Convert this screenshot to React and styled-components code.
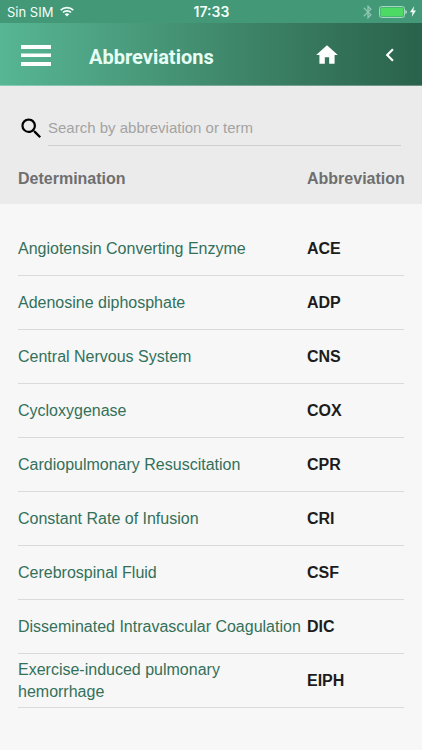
import React from 'react';
import styled, {createGlobalStyle} from 'styled-components';
import {MdBluetooth, MdChevronLeft, MdHome, MdSearch} from 'react-icons/md';

const GlobalStyle = createGlobalStyle`
  *, *::before, *::after {
    box-sizing: border-box;
  }

  body {
    margin: 0;
    background-color: #f7f7f7;
    font-family: 'Liberation Sans', Arial, sans-serif;
    font-size: 16px;
    line-height: 22px;
  }
`;

const StatusBar = styled.div`
  display: grid;
  grid-template-columns: 1fr auto 1fr;
  align-items: center;
  height: 23px;
  padding: 0 6px 0 7px;
  background-color: #439878;
  color: #f2fffa;
  font-family: Inter, sans-serif;
  font-size: 13px;
`;

const StatusGroup = styled.div`
  display: flex;
  align-items: center;
  justify-content: ${({$end}) => ($end ? 'flex-end' : 'flex-start')};
  gap: ${({$end}) => ($end ? '3px' : '7px')};
`;

const Clock = styled.time`
  font-size: 14px;
  font-weight: 600;
`;

const Bluetooth = styled(MdBluetooth)`
  color: #8fc7b1;
`;

const Header = styled.header`
  display: flex;
  align-items: center;
  height: 63px;
  padding: 2px 19px 0 21px;
  border-bottom: 1px solid rgba(255, 255, 255, 0.3);
  background: linear-gradient(to right, #57b694, #418b6e 50%, #2a624c);
`;

const IconButton = styled.button`
  display: flex;
  padding: 0;
  border: 0;
  background: none;
  color: #fff;
  cursor: pointer;
`;

const Title = styled.h1`
  flex-grow: 1;
  margin: 0 0 0 38px;
  padding-top: 3px;
  color: #e6fff5;
  font-family: Roboto, sans-serif;
  font-size: 20px;
  font-weight: 700;
  line-height: 24px;
`;

const HeaderActions = styled.div`
  display: flex;
  gap: 37px;
`;

const SearchPanel = styled.form`
  display: flex;
  align-items: center;
  padding: 24px 21px 0 18px;
  background-color: #ebebeb;
`;

const SearchLabel = styled.label`
  display: flex;
  width: 30px;
  color: #000;
`;

const SearchInput = styled.input`
  flex-grow: 1;
  min-width: 0;
  height: 36px;
  padding: 0;
  border: 0;
  border-bottom: 1px solid #cfcfcf;
  outline: 0;
  background: none;
  color: #333;
  font: inherit;
  font-size: 15px;

  &::placeholder {
    color: #a3a3a3;
    opacity: 1;
  }
`;

const Table = styled.table`
  width: 100%;
  border-collapse: collapse;
  table-layout: fixed;
`;

const TableHead = styled.thead`
  background-color: #ebebeb;
`;

const TableBody = styled.tbody`
  &::before {
    content: '';
    display: table-row;
    height: 18px;
  }
`;

const HeadCell = styled.th`
  width: ${({$width}) => $width || 'auto'};
  height: 58px;
  padding: 7px 0 0;
  color: #6f6f6f;
  text-align: left;

  &:first-child {
    padding-left: 18px;
  }
`;

const Cell = styled.td`
  height: 54px;
  padding: 0;

  &:first-child {
    padding-left: 18px;
  }

  &:last-child {
    padding-right: 18px;
  }
`;

const CellContent = styled.div`
  display: flex;
  align-items: center;
  min-height: 54px;
  border-bottom: 1px solid #dadada;
`;

const Term = styled.a`
  padding-right: 4px;
  color: #33705a;
  text-decoration: none;
`;

const Abbreviation = styled.strong`
  color: #1c1c1c;
`;

const terms = [
  {name: 'Angiotensin Converting Enzyme', short: 'ACE'},
  {name: 'Adenosine diphosphate', short: 'ADP'},
  {name: 'Central Nervous System', short: 'CNS'},
  {name: 'Cycloxygenase', short: 'COX'},
  {name: 'Cardiopulmonary Resuscitation', short: 'CPR'},
  {name: 'Constant Rate of Infusion', short: 'CRI'},
  {name: 'Cerebrospinal Fluid', short: 'CSF'},
  {name: 'Disseminated Intravascular Coagulation', short: 'DIC'},
  {name: 'Exercise-induced pulmonary hemorrhage', short: 'EIPH'},
];

const WifiIcon = () =>
  <svg width="14" height="11" viewBox="0 0 14 11" fill="none" stroke="currentColor" strokeWidth="1.7">
    <path d="M0.7 4.1a9 9 0 0 1 12.6 0" />
    <path d="M3 6.5a5.7 5.7 0 0 1 8 0" />
    <path d="M7 10.6L4.7 8.3a3.3 3.3 0 0 1 4.6 0z" fill="currentColor" stroke="none" />
  </svg>;

const BatteryIcon = () =>
  <svg width="28" height="12" viewBox="0 0 28 12">
    <rect x="0.5" y="0.5" width="25" height="11" rx="2" fill="none" stroke="#a5d6c3" />
    <rect x="1.5" y="1.5" width="23" height="9" rx="1" fill="#4cd964" />
    <path d="M26.5 4c1.6 0.6 1.6 3.4 0 4z" fill="#e0f5ec" />
  </svg>;

const BoltIcon = () =>
  <svg width="6" height="11" viewBox="0 0 6 11" fill="currentColor">
    <path d="M4.2 0L0 6.2h2.6L1.6 11 6 4.6H3.3z" />
  </svg>;

const MenuIcon = () =>
  <svg width="30" height="21" viewBox="0 0 30 21" fill="currentColor">
    <path d="M0 0h30v4H0zM0 8.5h30v3.5H0zM0 17h30v4H0z" />
  </svg>;

const App = () =>
  <>
    <GlobalStyle />
    <StatusBar>
      <StatusGroup>
        <span>Sin SIM</span>
        <WifiIcon />
      </StatusGroup>
      <Clock>17:33</Clock>
      <StatusGroup $end>
        <Bluetooth size={16} />
        <BatteryIcon />
        <BoltIcon />
      </StatusGroup>
    </StatusBar>
    <Header>
      <IconButton type="button" aria-label="Menu">
        <MenuIcon />
      </IconButton>
      <Title>Abbreviations</Title>
      <HeaderActions>
        <IconButton type="button" aria-label="Home">
          <MdHome size={26} />
        </IconButton>
        <IconButton type="button" aria-label="Back">
          <MdChevronLeft size={26} />
        </IconButton>
      </HeaderActions>
    </Header>
    <main>
      <SearchPanel role="search">
        <SearchLabel htmlFor="search" aria-label="Search">
          <MdSearch size={27} />
        </SearchLabel>
        <SearchInput id="search" type="text" placeholder="Search by abbreviation or term" />
      </SearchPanel>
      <Table>
        <TableHead>
          <tr>
            <HeadCell scope="col">Determination</HeadCell>
            <HeadCell scope="col" $width="115px">Abbreviation</HeadCell>
          </tr>
        </TableHead>
        <TableBody>
          {terms.map(({name, short}) =>
            <tr key={short}>
              <Cell>
                <CellContent>
                  <Term href={`#${short}`}>{name}</Term>
                </CellContent>
              </Cell>
              <Cell>
                <CellContent>
                  <Abbreviation>{short}</Abbreviation>
                </CellContent>
              </Cell>
            </tr>
          )}
        </TableBody>
      </Table>
    </main>
  </>;

export default App;
